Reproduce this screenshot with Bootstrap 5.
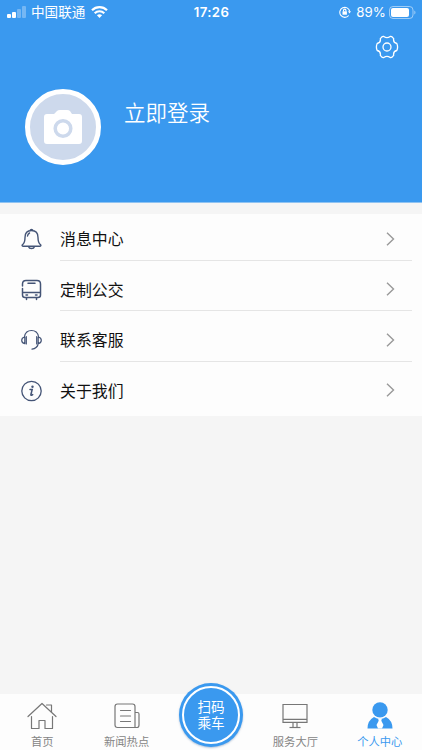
<!DOCTYPE html>
<html lang="zh-CN">
<head>
<meta charset="utf-8">
<meta name="viewport" content="width=device-width, initial-scale=1">
<title>个人中心</title>
<link rel="stylesheet" href="https://cdn.jsdelivr.net/npm/bootstrap@5.3.0/dist/css/bootstrap.min.css">
<style>
body{height:750px;overflow:hidden;background:#f5f5f5;font-family:Inter,"Noto Sans CJK SC",sans-serif;color:#111}
svg{display:block;flex-shrink:0}
.profile-head{height:203px;background:#3a99ef;border-bottom:1px solid #8fc3f2}
.status-bar{height:24px;padding:0 6px 0 7px;font-size:13px;line-height:24px}
.status-side{flex:1 1 0}
.clock{font-size:13.2px;font-weight:600;letter-spacing:.4px}
.carrier{font-size:13.6px;margin:0 6px 0 5px}
.level{font-size:13.3px;letter-spacing:.1px;margin:0 3px 0 5px}
.settings-row{padding:11px 23px 0 0}
.avatar{width:76px;height:76px;border:5px solid #fff;background:#cdd9ec}
.login-row{padding:30px 25px 0}
.login-name{font-size:21.5px;line-height:30px;font-weight:350;margin:9px 0 0 23px;color:#fff}
.menu-list{margin-top:11px;height:202px;background:#fdfdfd}
.menu-list a{height:50.5px;padding-left:21px;color:#111}
.menu-label{height:43px;margin-left:18px;margin-right:10px;padding-right:17px;border-bottom:1px solid #e5e5e5;font-size:15.9px}
.menu-label span{padding-top:3px}
.menu-list a:last-child .menu-label{border-bottom-color:transparent}
.tab-bar{height:56px;background:#fdfdfd}
.tab-bar a{flex:1 1 0;color:#858585;font-size:11.3px;line-height:16px;padding-top:7px}
.tab-bar a.active{color:#3a99ef}
.tab-bar .tab-text{margin-top:3px;white-space:nowrap}
.tab-bar a.scan-tab{padding:0;margin-top:-11px}
.scan-btn{width:64px;height:64px;background:#3a99ef;padding:3px;box-shadow:0 1px 2px rgba(40,90,150,.35)}
.scan-ring{border:2px solid #fff;color:#fff;font-size:13.6px;line-height:15.6px;padding-top:1px}
</style>
<script src="https://cdn.jsdelivr.net/npm/bootstrap@5.3.0/dist/js/bootstrap.bundle.min.js"></script>
</head>
<body class="d-flex flex-column">
<header class="profile-head text-white">
  <div class="status-bar d-flex align-items-center">
    <div class="status-side d-flex align-items-center">
      <svg width="19" height="12" viewBox="0 0 19 12" fill="#fff"><rect y="8" width="4" height="4" rx="1"/><rect x="5" y="6" width="4" height="6" rx="1"/><rect x="10" y="3" width="4" height="9" rx="1" opacity=".3"/><rect x="15" width="4" height="12" rx="1" opacity=".3"/></svg>
      <span class="carrier">中国联通</span>
      <svg width="17" height="12" viewBox="0 0 17 12" fill="none" stroke="#fff" stroke-width="2.2"><path d="M1 4.3C5.2.1 11.800.1 16 4.300M3.700 7.200c2.700-2.600 6.900-2.600 9.600 0"/><path d="M8.500 12 5.900 9.300c1.500-1.300 3.700-1.300 5.200 0z" fill="#fff" stroke="none"/></svg>
    </div>
    <span class="clock">17:26</span>
    <div class="status-side d-flex align-items-center justify-content-end">
      <svg width="12" height="12" viewBox="0 0 12 12" fill="none" stroke="#fff" stroke-width="1.100"><path d="M9.700 9.500A5 5 0 1 1 10.700 5.300"/><path d="m9 5.300 3 0-1.500 2.200z" fill="#fff" stroke="none"/><rect x="3.500" y="5.300" width="4.400" height="3.400" fill="#fff" stroke="none"/><path d="M4.500 5.500V4.300a1.200 1.200 0 0 1 2.400 0v1.200"/></svg>
      <span class="level">89%</span>
      <svg width="27" height="13" viewBox="0 0 27 13"><rect x=".5" y=".5" width="23.500" height="12" rx="3.500" fill="none" stroke="#fff" opacity=".5"/><rect x="2" y="2" width="18" height="9" rx="2" fill="#fff"/><path d="M25.300 4.500c1.600.6 1.600 3.400 0 4z" fill="#fff" opacity=".5"/></svg>
    </div>
  </div>
  <div class="settings-row d-flex justify-content-end">
    <svg width="24" height="24" viewBox="0 0 24 24" fill="none" stroke="#fff" stroke-width="1.300" stroke-linejoin="round"><path d="M8.800 1.500Q12 3.900 15.200 1.500Q16.500 1.300 17.500 2.300L18.700 3.700Q17.900 7.500 21.800 8.500Q23.400 12 21.800 15.500Q17.900 16.500 18.700 20.300L17.500 21.700Q16.500 22.700 15.200 22.500Q12 20.100 8.800 22.500Q7.500 22.700 6.500 21.700L5.300 20.300Q6.100 16.500 2.200 15.500Q.6 12 2.200 8.500Q6.100 7.500 5.300 3.700L6.500 2.300Q7.500 1.300 8.800 1.500Z"/><circle cx="12" cy="12" r="4"/></svg>
  </div>
  <div class="login-row d-flex align-items-start">
    <div class="avatar rounded-circle d-flex align-items-center justify-content-center">
      <svg width="38" height="36" viewBox="0 0 38 36"><path d="M3 5h7l3-3q1-1 3-1h7q2 0 3 1l2 3h7q3 0 3 3v24q0 3-3 3H3q-3 0-3-3V8q0-3 3-3z" fill="#fff"/><circle cx="19" cy="19.500" r="7.800" fill="#fff" stroke="#cdd9ec" stroke-width="3.500"/></svg>
    </div>
    <div class="login-name">立即登录</div>
  </div>
</header>
<nav class="menu-list">
  <a href="#" class="d-flex align-items-center text-decoration-none">
    <svg width="21" height="22" viewBox="0 0 21 22" fill="none" stroke="#445476" stroke-width="1.400" stroke-linecap="round" stroke-linejoin="round"><path d="M9 2.500a1.600 1.600 0 0 1 3 0M4 9.500C4 5 6.500 2.500 10.500 2.500S17 5 17 9.500c0 4 .8 6 2.600 7.300.5.500.4 1.400-.5 1.400H1.900c-.9 0-1-.9-.5-1.400C3.200 15.500 4 13.500 4 9.500M7.500 18.500c.7 2.700 5.300 2.700 6 0M6.500 8c.2-1.500.8-2.400 2-3"/></svg>
    <div class="menu-label flex-grow-1 d-flex align-items-center justify-content-between"><span>消息中心</span><svg width="9" height="14" viewBox="0 0 9 14" fill="none" stroke="#999" stroke-width="1.400"><path d="m1 .8 6.500 6.200L1 13.200"/></svg></div>
  </a>
  <a href="#" class="d-flex align-items-center text-decoration-none">
    <svg width="21" height="22" viewBox="0 0 21 22" fill="none" stroke="#445476" stroke-width="1.500" stroke-linecap="round" stroke-linejoin="round"><path d="M1.500 7V5q0-3.500 3.500-3.500h11Q19.500 1.500 19.500 5v11q0 2.500-2.500 2.500H4q-2.500 0-2.500-2.500V9.500M1.500 13.500h18M7 4.300h7M5 16h1.500M14.500 16H16M5.500 18.800v1.700M15.500 18.800v1.700"/></svg>
    <div class="menu-label flex-grow-1 d-flex align-items-center justify-content-between"><span>定制公交</span><svg width="9" height="14" viewBox="0 0 9 14" fill="none" stroke="#999" stroke-width="1.400"><path d="m1 .8 6.500 6.200L1 13.200"/></svg></div>
  </a>
  <a href="#" class="d-flex align-items-center text-decoration-none">
    <svg width="21" height="22" viewBox="0 0 21 22" fill="none" stroke="#445476" stroke-width="1.200" stroke-linecap="round" stroke-linejoin="round"><path d="M3.500 7.500C4.200 3.800 6.500 1.500 10.500 1.500S16.800 3.800 17.500 7.500M5.300 7.500v7.500M15.700 7.500v7.500M3.800 8Q.7 8.500.7 11.300t3.100 3.300zM17.200 8Q20.300 8.500 20.300 11.300t-3.100 3.300zM17 15.500q-1 3.800-6 4.700"/></svg>
    <div class="menu-label flex-grow-1 d-flex align-items-center justify-content-between"><span>联系客服</span><svg width="9" height="14" viewBox="0 0 9 14" fill="none" stroke="#999" stroke-width="1.400"><path d="m1 .8 6.500 6.200L1 13.200"/></svg></div>
  </a>
  <a href="#" class="d-flex align-items-center text-decoration-none">
    <svg width="21" height="22" viewBox="0 0 21 22" fill="none" stroke="#445476" stroke-width="1.300" stroke-linecap="round"><circle cx="10.500" cy="11" r="9.700"/><path d="M9 9.500h2.200l-1.300 5q-.2 1 .7.800l1.100-.7" stroke-width="1.500"/><circle cx="11.500" cy="6.700" r="1.200" fill="#445476" stroke="none"/></svg>
    <div class="menu-label flex-grow-1 d-flex align-items-center justify-content-between"><span>关于我们</span><svg width="9" height="14" viewBox="0 0 9 14" fill="none" stroke="#999" stroke-width="1.400"><path d="m1 .8 6.500 6.200L1 13.200"/></svg></div>
  </a>
</nav>
<nav class="tab-bar d-flex mt-auto">
  <a href="#" class="d-flex flex-column align-items-center text-decoration-none">
    <svg width="30" height="30" viewBox="0 0 30 30" fill="none" stroke="#777" stroke-width="1.200" stroke-linejoin="round" stroke-linecap="round"><path d="M1 15.500 15 2.500l14 13M4.500 15.500v12H12v-8h6v8h7.500v-12M19.500 4h5v7"/></svg>
    <span class="tab-text">首页</span>
  </a>
  <a href="#" class="d-flex flex-column align-items-center text-decoration-none">
    <svg width="30" height="30" viewBox="0 0 30 30" fill="none" stroke="#777" stroke-width="1.200" stroke-linejoin="round" stroke-linecap="round"><path d="M23 26.500H5.500q-2.500 0-2.500-2.500V5.500Q3 3 5.500 3h15Q23 3 23 5.500zM23 11.500h2.500q1.500 0 1.500 1.500v11q0 2.500-2 2.500h-2M8.500 9.500h10M8.500 15h10M8.500 20.500h10"/></svg>
    <span class="tab-text">新闻热点</span>
  </a>
  <a href="#" class="scan-tab d-flex flex-column align-items-center text-decoration-none">
    <div class="scan-btn rounded-circle"><div class="scan-ring w-100 h-100 rounded-circle d-flex flex-column align-items-center justify-content-center"><span>扫码</span><span>乘车</span></div></div>
  </a>
  <a href="#" class="d-flex flex-column align-items-center text-decoration-none">
    <svg width="30" height="30" viewBox="0 0 30 30" fill="none" stroke="#777" stroke-width="1.200"><path d="M3 3.500h24v17.800H3zM3 18.300h24M13 21.500v4.500M17 21.500v4.500"/><path d="M9.500 26.500h11"/></svg>
    <span class="tab-text">服务大厅</span>
  </a>
  <a href="#" class="active d-flex flex-column align-items-center text-decoration-none">
    <svg width="30" height="30" viewBox="0 0 30 30" fill="#3a99ef"><circle cx="15" cy="8.900" r="7.700"/><path d="M9 16Q15 20 21 16Q27.500 19.500 27.500 27.500H2.500Q2.500 19.500 9 16z"/><path d="m13 17.200 2 .6 2-.6-.7 2.600L18.500 24 17 27.600h-4L11.500 24l2.200-4.200z" fill="#fff"/></svg>
    <span class="tab-text">个人中心</span>
  </a>
</nav>
</body>
</html>
